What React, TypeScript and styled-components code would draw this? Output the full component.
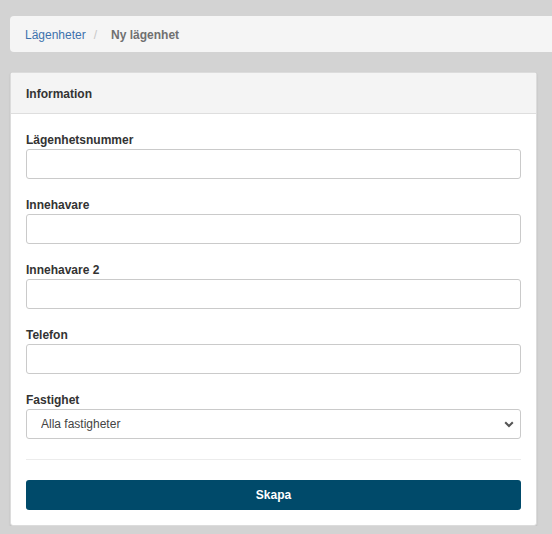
import React from "react";
import styled, { createGlobalStyle } from "styled-components";

const Global = createGlobalStyle`
  html, body {
    margin: 0;
    padding: 0;
    background: #d3d3d3;
    font-family: "Liberation Sans", Arial, sans-serif;
    overflow: hidden;
  }
  * { box-sizing: border-box; }
`;

const Page = styled.div`
  padding: 16px 15px 0 10px;
  width: 552px;
`;

const Breadcrumb = styled.nav`
  display: flex;
  align-items: center;
  height: 36px;
  margin-right: -40px;
  padding: 1px 15px 0;
  background: #f5f5f5;
  border-radius: 4px;
  font-size: 12px;
`;

const Crumb = styled.a`
  color: #3d72ad;
  text-decoration: none;
`;

const Sep = styled.span`
  color: #c8c8c8;
  padding: 0 14px 0 8px;
`;

const Current = styled.span`
  color: #707070;
  font-weight: bold;
`;

const Card = styled.section`
  margin-top: 20px;
  background: #fff;
  border: 1px solid #dcdcdc;
  border-radius: 3px;
  box-shadow: 0 1px 2px rgba(0, 0, 0, 0.12);
`;

const CardHeader = styled.header`
  height: 41px;
  display: flex;
  align-items: center;
  padding: 1px 15px 0;
  background: #f4f4f4;
  border-bottom: 1px solid #dedede;
  font-size: 12px;
  font-weight: bold;
  color: #333;
`;

const CardBody = styled.div`
  padding: 19px 15px 15px;
`;

const Group = styled.div`
  display: flex;
  flex-direction: column;
  margin-bottom: 19px;
`;

const Label = styled.label`
  font-size: 12px;
  font-weight: bold;
  color: #333;
  line-height: 15px;
  margin-bottom: 1px;
`;

const Input = styled.input`
  height: 30px;
  width: 100%;
  border: 1px solid #cacaca;
  border-radius: 3px;
  background: #fff;
  font: inherit;
  font-size: 12px;
  padding: 0 10px;
`;

const SelectWrap = styled.div`
  position: relative;
`;

const Select = styled.select`
  appearance: none;
  height: 30px;
  width: 100%;
  border: 1px solid #cacaca;
  border-radius: 3px;
  background: #fff;
  font-family: inherit;
  font-size: 12px;
  color: #444;
  padding: 0 30px 0 14px;
`;

const Chevron = styled.svg`
  position: absolute;
  right: 7px;
  top: 12px;
  pointer-events: none;
`;

const Divider = styled.hr`
  border: 0;
  border-top: 1px solid #ececec;
  margin: 20px 0 20px;
`;

const Button = styled.button`
  width: 100%;
  height: 30px;
  border: 0;
  border-radius: 3px;
  background: #004a6a;
  color: #fff;
  font-family: inherit;
  font-size: 12px;
  font-weight: bold;
`;

const fields = ["Lägenhetsnummer", "Innehavare", "Innehavare 2", "Telefon"];

export default function App() {
  return (
    <Page>
      <Global />
      <Breadcrumb>
        <Crumb href="#">Lägenheter</Crumb>
        <Sep>/</Sep>
        <Current>Ny lägenhet</Current>
      </Breadcrumb>
      <Card>
        <CardHeader>Information</CardHeader>
        <CardBody>
          {fields.map((f) => (
            <Group key={f}>
              <Label>{f}</Label>
              <Input type="text" />
            </Group>
          ))}
          <Group>
            <Label>Fastighet</Label>
            <SelectWrap>
              <Select defaultValue="all">
                <option value="all">Alla fastigheter</option>
              </Select>
              <Chevron width="10" height="7" viewBox="0 0 10 7">
                <path d="M1.2 1.2 L5 5 L8.8 1.2" fill="none" stroke="#555" strokeWidth="2" />
              </Chevron>
            </SelectWrap>
          </Group>
          <Divider />
          <Button>Skapa</Button>
        </CardBody>
      </Card>
    </Page>
  );
}
